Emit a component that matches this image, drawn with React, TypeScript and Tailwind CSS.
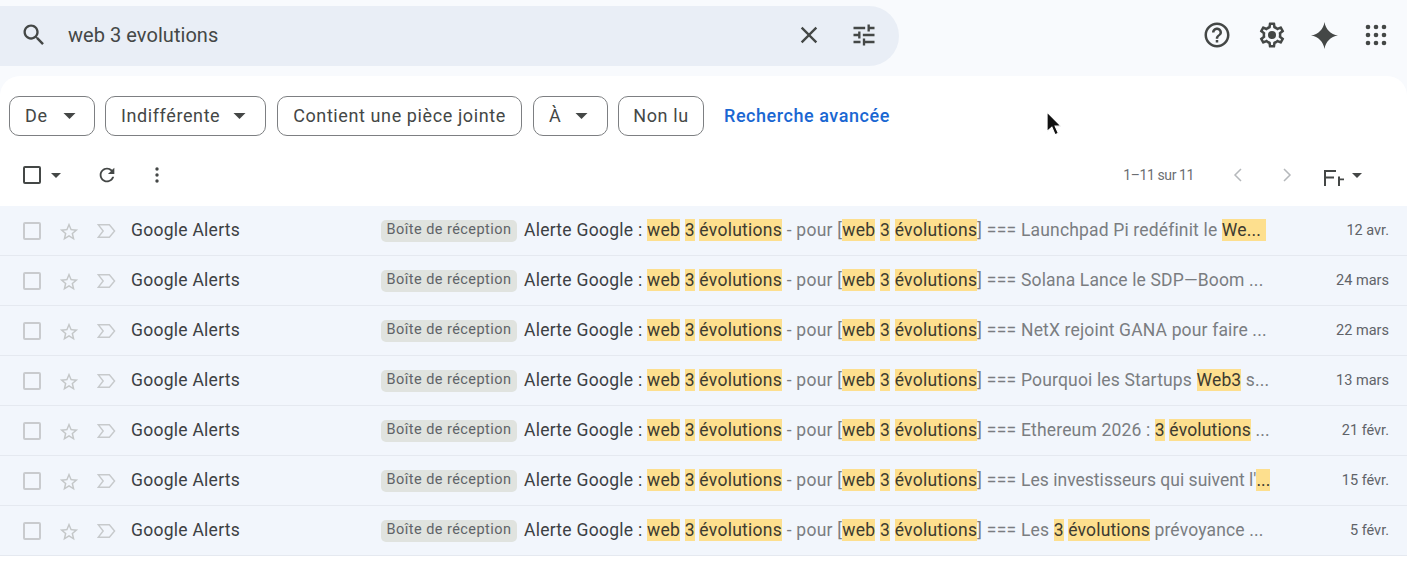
import type { ReactNode } from "react";

const Icon = ({ d, className }: { d: string; className: string }) => (
  <svg viewBox="0 0 24 24" fill="currentColor" className={className}>
    <path d={d} />
  </svg>
);

const SEARCH = "M15.5 14h-.79l-.28-.27C15.41 12.59 16 11.11 16 9.5 16 5.91 13.09 3 9.5 3S3 5.91 3 9.5 5.91 16 9.5 16c1.61 0 3.09-.59 4.23-1.57l.27.28v.79l5 4.99L20.49 19l-4.99-5zm-6 0C7.01 14 5 11.99 5 9.5S7.01 5 9.5 5 14 7.01 14 9.5 11.99 14 9.5 14z";
const CLOSE = "M19 6.41L17.59 5 12 10.59 6.41 5 5 6.41 10.59 12 5 17.59 6.41 19 12 13.41 17.59 19 19 17.59 13.41 12z";
const TUNE = "M3 17v2h6v-2H3zM3 5v2h10V5H3zm10 16v-2h8v-2h-8v-2h-2v6h2zM7 9v2H3v2h4v2h2V9H7zm14 4v-2H11v2h10zm-6-4h2V7h4V5h-4V3h-2v6z";
const HELP = "M11 18h2v-2h-2v2zm1-16C6.48 2 2 6.48 2 12s4.48 10 10 10 10-4.48 10-10S17.52 2 12 2zm0 18c-4.41 0-8-3.59-8-8s3.59-8 8-8 8 3.59 8 8-3.59 8-8 8zm0-14c-2.21 0-4 1.79-4 4h2c0-1.1.9-2 2-2s2 .9 2 2c0 2-3 1.75-3 5h2c0-2.25 3-2.5 3-5 0-2.21-1.79-4-4-4z";
const GEAR = "M19.43 12.98c.04-.32.07-.64.07-.98 0-.34-.03-.66-.07-.98l2.11-1.65c.19-.15.24-.42.12-.64l-2-3.46c-.09-.16-.26-.25-.44-.25-.06 0-.12.01-.17.03l-2.49 1c-.52-.4-1.08-.73-1.69-.98l-.38-2.65C14.46 2.18 14.25 2 14 2h-4c-.25 0-.46.18-.49.42l-.38 2.65c-.61.25-1.17.59-1.69.98l-2.49-1c-.06-.02-.12-.03-.18-.03-.17 0-.34.09-.43.25l-2 3.46c-.13.22-.07.49.12.64l2.11 1.65c-.04.32-.07.65-.07.98 0 .33.03.66.07.98l-2.11 1.65c-.19.15-.24.42-.12.64l2 3.46c.09.16.26.25.44.25.06 0 .12-.01.17-.03l2.49-1c.52.4 1.08.73 1.69.98l.38 2.65c.03.24.24.42.49.42h4c.25 0 .46-.18.49-.42l.38-2.65c.61-.25 1.17-.59 1.69-.98l2.49 1c.06.02.12.03.18.03.17 0 .34-.09.43-.25l2-3.46c.12-.22.07-.49-.12-.64l-2.11-1.65zm-1.98-1.71c.04.31.05.52.05.73 0 .21-.02.43-.05.73l-.14 1.13.89.7 1.08.84-.7 1.21-1.27-.51-1.04-.42-.9.68c-.43.32-.84.56-1.25.73l-1.06.43-.16 1.13-.2 1.35h-1.4l-.19-1.35-.16-1.13-1.06-.43c-.43-.18-.83-.41-1.23-.71l-.91-.7-1.06.43-1.27.51-.7-1.21 1.08-.84.89-.7-.14-1.13c-.03-.31-.05-.54-.05-.74s.02-.43.05-.73l.14-1.13-.89-.7-1.08-.84.7-1.21 1.27.51 1.04.42.9-.68c.43-.32.84-.56 1.25-.73l1.06-.43.16-1.13.2-1.35h1.39l.19 1.35.16 1.13 1.06.43c.43.18.83.41 1.23.71l.91.7 1.06-.43 1.27-.51.7 1.21-1.07.85-.89.7.14 1.13z";
const SPARK = "M12 0C13 6.5 17.5 11 24 12 17.5 13 13 17.5 12 24 11 17.5 6.5 13 0 12 6.5 11 11 6.5 12 0Z";
const REFRESH = "M17.65 6.35C16.2 4.9 14.21 4 12 4c-4.42 0-7.99 3.58-7.99 8s3.57 8 7.99 8c3.73 0 6.84-2.55 7.73-6h-2.08c-.82 2.33-3.04 4-5.65 4-3.31 0-6-2.69-6-6s2.69-6 6-6c1.66 0 3.14.69 4.22 1.78L13 11h7V4l-2.35 2.35z";
const STAR = "M22 9.24l-7.19-.62L12 2 9.19 8.63 2 9.24l5.46 4.73L5.82 21 12 17.27 18.18 21l-1.63-7.03L22 9.24zM12 15.4l-3.76 2.27 1-4.28-3.32-2.88 4.38-.38L12 6.1l1.71 4.04 4.38.38-3.32 2.88 1 4.28L12 15.4z";

const Caret = ({ className }: { className: string }) => (
  <svg viewBox="0 0 10 5" fill="currentColor" className={className}>
    <path d="M0 0h10L5 5z" />
  </svg>
);

const Apps = () => (
  <svg viewBox="0 0 22 22" fill="#444746" className="w-[22px] h-[22px] ml-[27px]">
    {[3, 11, 19].map((y) =>
      [3, 11, 19].map((x) => <circle key={`${x}-${y}`} cx={x} cy={y} r="2.3" />)
    )}
  </svg>
);

const Pill = ({ label, caret, className }: { label: string; caret?: boolean; className: string }) => (
  <div className={`h-[40px] pb-[2px] flex items-center rounded-[10px] border border-[#7d7f82] text-[#444746] text-[18px] tracking-[0.6px] ${className}`}>
    <span>{label}</span>
    {caret && <Caret className="w-[13px] h-[6px] mt-[2px] text-[#444746]" />}
  </div>
);

const Hl = ({ children, className = "" }: { children: ReactNode; className?: string }) => (
  <span className={`bg-[#fddf8e] text-[#3c3a30] inline-block h-[22px] leading-[22px] ${className}`}>{children}</span>
);

const Query = () => (
  <>
    <Hl>web</Hl> <Hl>3</Hl> <Hl>évolutions</Hl>
  </>
);

const rows: { snippet: ReactNode; date: string; tight?: boolean }[] = [
  { snippet: <>Launchpad Pi redéfinit le <Hl className="pr-[5px]">We...</Hl></>, date: "12 avr." },
  { snippet: <>Solana Lance le SDP—Boom ...</>, date: "24 mars" },
  { snippet: <>NetX rejoint GANA pour faire ...</>, date: "22 mars" },
  { snippet: <>Pourquoi les Startups <Hl>Web3</Hl> s...</>, date: "13 mars" },
  { snippet: <>Ethereum 2026 : <Hl>3</Hl> <Hl>évolutions</Hl> ...</>, date: "21 févr." },
  { snippet: <>Les investisseurs qui suivent l'<Hl>...</Hl></>, date: "15 févr.", tight: true },
  { snippet: <>Les <Hl>3</Hl> <Hl>évolutions</Hl> prévoyance ...</>, date: "5 févr." },
];

const Row = ({ snippet, date, tight }: { snippet: ReactNode; date: string; tight?: boolean }) => (
  <div className="h-[50px] flex items-center bg-[#f2f6fc] border-b border-[#e5e9f0] pl-[23px] pr-[18px] text-[17.5px] tracking-[0.26px] whitespace-nowrap">
    <div className="w-[18px] h-[18px] rounded-[2px] border-2 border-[#c9cbce] mt-[1px]" />
    <Icon d={STAR} className="w-[22px] h-[22px] ml-[17px] mt-[3px] text-[#c4c7c8]" />
    <svg viewBox="0 0 20 16" fill="none" stroke="#c7cacc" strokeWidth="1.5" className="w-[19px] h-[16px] ml-[17px]">
      <path d="M1.5 1.5H13L18.5 8 13 14.5H1.5L6.5 8Z" />
    </svg>
    <span className="ml-[15px] w-[250px] text-[#3c4043]">Google Alerts</span>
    <span className="h-[22px] w-[136px] rounded-[5px] bg-[#e0e3df] text-[#5f6368] text-[14.5px] tracking-[0.45px] leading-[20px] text-center">Boîte de réception</span>
    <div className="ml-[7px] flex-1 min-w-0 text-[#7a7d81]">
      <span className="text-[#3c4043]">Alerte Google : <Query /></span> - pour [<Query />] === <span className={tight ? "tracking-[0.02px]" : "tracking-[0.16px]"}>{snippet}</span>
    </div>
    <span className="text-[14.5px] tracking-normal text-[#5f6368]">{date}</span>
  </div>
);

export default function App() {
  return (
    <div className="w-[1407px] h-[565px] overflow-hidden bg-[#f8fafd] font-['Roboto',sans-serif]">
      <header className="h-[76px] flex items-start pt-[6px] pr-[20px]">
        <div className="w-[899px] h-[60px] rounded-r-full rounded-l-[30px] bg-[#e9eef6] flex items-center pl-[20px] pr-[21px] text-[#444746]">
          <Icon d={SEARCH} className="w-[28px] h-[28px] -mt-[2px]" />
          <span className="ml-[20px] flex-1 text-[20px] tracking-[0.05px] -mt-[2px]">web 3 evolutions</span>
          <Icon d={CLOSE} className="w-[28px] h-[28px] -mt-[2px]" />
          <Icon d={TUNE} className="w-[28px] h-[28px] ml-[27px] -mt-[2px]" />
        </div>
        <div className="flex-1 flex items-center justify-end h-[58px] text-[#444746]">
          <Icon d={HELP} className="w-[30px] h-[30px]" />
          <svg viewBox="0 0 24 24" fill="currentColor" className="w-[30px] h-[30px] ml-[25px]">
            <path d={GEAR} />
            <circle cx="12" cy="12" r="3.2" />
          </svg>
          <Icon d={SPARK} className="w-[27px] h-[27px] ml-[24px]" />
          <Apps />
        </div>
      </header>

      <main className="relative bg-white rounded-t-[20px] h-[489px]">
        <div className="flex items-center pt-[20px] pl-[9px]">
          <Pill label="De" caret className="w-[86px] pl-[15px] gap-[15px]" />
          <Pill label="Indifférente" caret className="w-[161px] ml-[10px] pl-[15px] gap-[13px]" />
          <Pill label="Contient une pièce jointe" className="w-[245px] ml-[11px] justify-center" />
          <Pill label="À" caret className="w-[75px] ml-[11px] pl-[15px] gap-[14px]" />
          <Pill label="Non lu" className="w-[86px] ml-[10px] justify-center" />
          <span className="ml-[20px] pb-[2px] text-[18px] font-medium tracking-[0.55px] text-[#1a67d2]">Recherche avancée</span>
        </div>

        <div className="h-[70px] flex items-center pt-[8px] pl-[23px] pr-[45px] text-[#444746]">
          <div className="w-[18px] h-[18px] rounded-[2px] border-2 border-[#444746]" />
          <Caret className="w-[10px] h-[5px] ml-[10px]" />
          <Icon d={REFRESH} className="w-[22px] h-[22px] ml-[35px]" />
          <svg viewBox="0 0 4 16" fill="currentColor" className="w-[4px] h-[16px] ml-[37px]">
            <circle cx="2" cy="2" r="1.7" />
            <circle cx="2" cy="8" r="1.7" />
            <circle cx="2" cy="14" r="1.7" />
          </svg>
          <span className="ml-auto text-[14px] tracking-[-0.4px] text-[#6b6e72]">1–11 sur 11</span>
          <svg viewBox="0 0 10 16" fill="none" stroke="#b5b8bb" strokeWidth="1.5" className="w-[10px] h-[16px] ml-[39px]">
            <path d="M8 2 2 8l6 6" />
          </svg>
          <svg viewBox="0 0 10 16" fill="none" stroke="#b5b8bb" strokeWidth="1.5" className="w-[10px] h-[16px] ml-[39px]">
            <path d="M2 2l6 6-6 6" />
          </svg>
          <svg viewBox="0 0 20 16" fill="#444746" className="w-[20px] h-[16px] ml-[32px] mt-[5px]">
            <path d="M0 0h12v2H2v4.5h8v2H2V16H0zM14 6.5h2V16h-2zM16 8.5h4v1.8h-4z" />
          </svg>
          <Caret className="w-[10px] h-[5px] ml-[8px]" />
        </div>

        {rows.map((r) => (
          <Row key={r.date} snippet={r.snippet} date={r.date} tight={r.tight} />
        ))}

        <svg viewBox="0 0 14 24" className="absolute left-[1046px] top-[35px] w-[15px] h-[26px]">
          <path d="M1 1v18l4.5-4 3 7 3-1.4-3-6.6H14Z" fill="#111" stroke="#fff" strokeWidth="1" />
        </svg>
      </main>
    </div>
  );
}
